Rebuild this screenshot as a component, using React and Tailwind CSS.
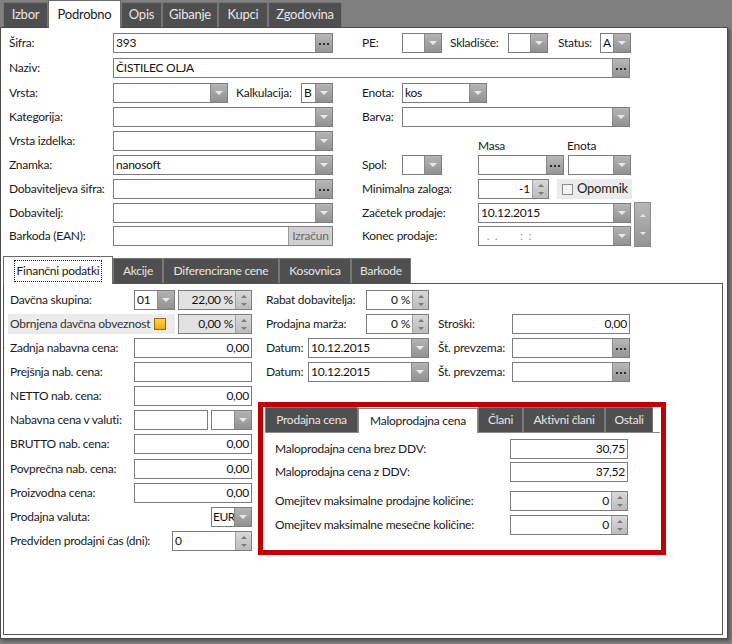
import React from "react";

function Btn({ kind }) {
  if (kind === "dots") {
    return (
      <div className="w-[17px] shrink-0 border-l border-[#8a8a8a] bg-linear-to-b from-[#b8b8b8] to-[#969696] flex items-center justify-center gap-[2px] pt-[2px]">
        <i className="w-[2px] h-[2px] bg-[#2e2e2e]" />
        <i className="w-[2px] h-[2px] bg-[#2e2e2e]" />
        <i className="w-[2px] h-[2px] bg-[#2e2e2e]" />
      </div>
    );
  }
  if (kind === "combo") {
    return (
      <div className="w-[17px] shrink-0 border-l border-[#8a8a8a] bg-linear-to-b from-[#b4b4b4] to-[#929292] flex items-center justify-center">
        <i className="w-0 h-0 border-x-[4px] border-x-transparent border-t-[4px] border-t-[#e9e9e9]" />
      </div>
    );
  }
  if (kind === "spin") {
    return (
      <div className="w-[16px] shrink-0 border-l border-[#a0a0a0] bg-linear-to-b from-[#d9d9d9] to-[#bcbcbc] flex flex-col items-center justify-center gap-[5px]">
        <i className="w-0 h-0 border-x-[3px] border-x-transparent border-b-[3px] border-b-[#7a7a7a]" />
        <i className="w-0 h-0 border-x-[3px] border-x-transparent border-t-[3px] border-t-[#7a7a7a]" />
      </div>
    );
  }
  return null;
}

function Field({ w, v = "", right, kind, ro, muted, tight }) {
  return (
    <div className={`h-[20px] shrink-0 flex border border-[#7d7d7d] ${ro ? "bg-[#e2e2e2]" : "bg-white"} ${w}`}>
      <div
        className={`flex-1 min-w-0 leading-[18px] whitespace-pre overflow-hidden ${tight ? "pl-[1px] tracking-[-0.5px]" : "px-[2px]"} ${right ? "text-right" : ""} ${muted ? "text-[#9a9a9a]" : "text-[#111]"}`}
      >
        {v}
      </div>
      {kind && <Btn kind={kind} />}
    </div>
  );
}

function Label({ w, children }) {
  return <div className={`${w} shrink-0 leading-[20px] whitespace-nowrap`}>{children}</div>;
}

function Tab({ label, active, w, focus }) {
  if (active) {
    return (
      <div className={`${w} h-[28px] -mb-px relative z-10 bg-white border border-[#6a6a6a] border-b-0 flex items-center justify-center text-[#1a1a1a]`}>
        <span className={focus ? "border border-dotted border-[#222] px-[2px] leading-[20px]" : ""}>{label}</span>
      </div>
    );
  }
  return (
    <div className={`${w} h-[25px] bg-[#4f4f4f] border border-[#777] border-b-0 flex items-center justify-center text-[#e6e6e6]`}>
      {label}
    </div>
  );
}

export default function App() {
  return (
    <div className="w-[732px] h-[644px] bg-[#808080] overflow-hidden font-['Lato',sans-serif] text-[12px] tracking-[-0.25px] text-[#1a1a1a]">
      {/* top tabs */}
      <div className="h-[27px] flex items-end pl-[3px] text-[13px]">
        <Tab w="w-[45px]" label="Izbor" />
        <Tab w="w-[73px]" label="Podrobno" active />
        <Tab w="w-[41px]" label="Opis" />
        <Tab w="w-[56px]" label="Gibanje" />
        <Tab w="w-[50px]" label="Kupci" />
        <Tab w="w-[74px]" label="Zgodovina" />
      </div>

      <div className="w-[728px] h-[612px] bg-white border border-[#4a4a4a] shadow-[2px_2px_3px_rgba(0,0,0,0.35)] flex flex-col">
        {/* header form */}
        <div className="flex flex-col pl-[8px] pt-[5px]">
          <div className="flex items-center h-[20px]">
            <Label w="w-[104px]">Šifra:</Label>
            <Field w="w-[220px]" v="393" kind="dots" />
            <div className="w-[29px] shrink-0" />
            <Label w="w-[40px]">PE:</Label>
            <Field w="w-[40px]" kind="combo" />
            <div className="w-[8px] shrink-0" />
            <Label w="w-[58px]">Skladišče:</Label>
            <Field w="w-[40px]" kind="combo" />
            <div className="w-[10px] shrink-0" />
            <Label w="w-[42px]">Status:</Label>
            <Field w="w-[31px]" v="A" kind="combo" />
          </div>

          <div className="flex items-center h-[20px] mt-[5px]">
            <Label w="w-[104px]">Naziv:</Label>
            <Field w="w-[517px]" v="ČISTILEC OLJA" kind="dots" />
          </div>

          <div className="flex items-center h-[20px] mt-[5px]">
            <Label w="w-[104px]">Vrsta:</Label>
            <Field w="w-[115px]" kind="combo" />
            <div className="w-[8px] shrink-0" />
            <Label w="w-[65px]">Kalkulacija:</Label>
            <Field w="w-[32px]" v="B" kind="combo" />
            <div className="w-[29px] shrink-0" />
            <Label w="w-[40px]">Enota:</Label>
            <Field w="w-[85px]" v="kos" kind="combo" />
          </div>

          <div className="flex items-center h-[20px] mt-[4px]">
            <Label w="w-[104px]">Kategorija:</Label>
            <Field w="w-[220px]" kind="combo" />
            <div className="w-[29px] shrink-0" />
            <Label w="w-[40px]">Barva:</Label>
            <Field w="w-[228px]" kind="combo" />
          </div>

          <div className="flex items-center h-[20px] mt-[4px]">
            <Label w="w-[104px]">Vrsta izdelka:</Label>
            <Field w="w-[220px]" kind="combo" />
            <div className="w-[145px] shrink-0" />
            <div className="w-[89px] shrink-0 self-end leading-[14px] -mb-[2px]">Masa</div>
            <div className="shrink-0 self-end leading-[14px] -mb-[2px]">Enota</div>
          </div>

          <div className="flex items-center h-[20px] mt-[4px]">
            <Label w="w-[104px]">Znamka:</Label>
            <Field w="w-[220px]" v="nanosoft" kind="combo" />
            <div className="w-[29px] shrink-0" />
            <Label w="w-[40px]">Spol:</Label>
            <Field w="w-[40px]" kind="combo" />
            <div className="w-[36px] shrink-0" />
            <Field w="w-[86px]" kind="dots" />
            <div className="w-[4px] shrink-0" />
            <Field w="w-[63px]" kind="combo" />
          </div>

          <div className="flex items-center h-[20px] mt-[4px]">
            <Label w="w-[104px]">Dobaviteljeva šifra:</Label>
            <Field w="w-[220px]" kind="dots" />
            <div className="w-[29px] shrink-0" />
            <Label w="w-[116px]">Minimalna zaloga:</Label>
            <Field w="w-[71px]" v="-1" right kind="spin" />
            <div className="w-[8px] shrink-0" />
            <div className="w-[75px] h-[20px] bg-[#ebebeb] flex items-center gap-[4px] pl-[5px]">
              <i className="w-[11px] h-[11px] border border-[#8d8d8d] bg-[#f4f4f4]" />
              <span className="text-[13px] text-[#222]">Opomnik</span>
            </div>
          </div>

          <div className="flex mt-[4px]">
            <div className="flex flex-col gap-[3px]">
              <div className="flex items-center h-[20px]">
                <Label w="w-[104px]">Dobavitelj:</Label>
                <Field w="w-[220px]" kind="combo" />
                <div className="w-[29px] shrink-0" />
                <Label w="w-[116px]">Začetek prodaje:</Label>
                <Field w="w-[153px]" v="10.12.2015" kind="combo" />
              </div>
              <div className="flex items-center h-[20px]">
                <Label w="w-[104px]">Barkoda (EAN):</Label>
                <div className="w-[220px] h-[20px] shrink-0 flex border border-[#7d7d7d] bg-white">
                  <div className="flex-1" />
                  <div className="w-[44px] border-l border-[#9a9a9a] bg-[#cfcfcf] text-[#6a6a6a] leading-[18px] text-center">Izračun</div>
                </div>
                <div className="w-[29px] shrink-0" />
                <Label w="w-[116px]">Konec prodaje:</Label>
                <Field w="w-[153px]" v={"  .  .        :  :"} muted kind="combo" />
              </div>
            </div>
            <div className="ml-[3px] -mt-[1px] w-[17px] h-[45px] border border-[#8a8a8a] bg-linear-to-b from-[#b8b8b8] to-[#949494] flex flex-col items-center justify-between py-[11px]">
              <i className="w-0 h-0 border-x-[3px] border-x-transparent border-b-[3px] border-b-[#e8e8e8]" />
              <i className="w-0 h-0 border-x-[3px] border-x-transparent border-t-[3px] border-t-[#e8e8e8]" />
            </div>
          </div>
        </div>

        {/* inner tabs */}
        <div className="ml-[2px] mt-[8px] h-[28px] flex items-end">
          <Tab w="w-[110px]" label="Finančni podatki" active focus />
          <Tab w="w-[50px]" label="Akcije" />
          <Tab w="w-[116px]" label="Diferencirane cene" />
          <Tab w="w-[72px]" label="Kosovnica" />
          <Tab w="w-[60px]" label="Barkode" />
        </div>

        <div className="ml-[2px] w-[720px] h-[352px] border border-[#555] flex pl-[6px] pt-[6px]">
          {/* left column */}
          <div className="w-[242px] shrink-0 flex flex-col gap-[4px]">
            <div className="flex items-center h-[20px]">
              <Label w="w-[124px]">Davčna skupina:</Label>
              <Field w="w-[41px]" v="01" kind="combo" />
              <div className="w-[3px] shrink-0" />
              <Field w="w-[74px]" v="22,00 %" right ro kind="spin" />
            </div>
            <div className="flex items-center h-[20px]">
              <div className="w-[167px] -ml-[2px] pl-[2px] h-[20px] bg-[#ebebeb] flex items-center shrink-0">
                <span className="text-[#333] whitespace-nowrap">Obrnjena davčna obveznost</span>
                <i className="ml-[4px] w-[12px] h-[12px] shrink-0 border border-[#9c6a00] bg-linear-to-b from-[#ffd54a] to-[#f0a800]" />
              </div>
              <div className="w-[3px] shrink-0" />
              <Field w="w-[74px]" v="0,00 %" right ro kind="spin" />
            </div>
            <div className="flex items-center h-[20px]">
              <Label w="w-[124px]">Zadnja nabavna cena:</Label>
              <Field w="w-[118px]" v="0,00" right />
            </div>
            <div className="flex items-center h-[20px]">
              <Label w="w-[124px]">Prejšnja nab. cena:</Label>
              <Field w="w-[118px]" />
            </div>
            <div className="flex items-center h-[20px]">
              <Label w="w-[124px]">NETTO nab. cena:</Label>
              <Field w="w-[118px]" v="0,00" right />
            </div>
            <div className="flex items-center h-[20px]">
              <Label w="w-[124px]">Nabavna cena v valuti:</Label>
              <Field w="w-[74px]" />
              <div className="w-[3px] shrink-0" />
              <Field w="w-[41px]" kind="combo" />
            </div>
            <div className="flex items-center h-[20px]">
              <Label w="w-[124px]">BRUTTO nab. cena:</Label>
              <Field w="w-[118px]" v="0,00" right />
            </div>
            <div className="flex items-center h-[20px] mt-[1px]">
              <Label w="w-[124px]">Povprečna nab. cena:</Label>
              <Field w="w-[118px]" v="0,00" right />
            </div>
            <div className="flex items-center h-[20px]">
              <Label w="w-[124px]">Proizvodna cena:</Label>
              <Field w="w-[118px]" v="0,00" right />
            </div>
            <div className="flex items-center h-[20px]">
              <Label w="w-[201px]">Prodajna valuta:</Label>
              <Field w="w-[41px]" v="EUR" tight kind="combo" />
            </div>
            <div className="flex items-center h-[20px]">
              <Label w="w-[162px]">Predviden prodajni čas (dni):</Label>
              <Field w="w-[80px]" v="0" kind="spin" />
            </div>
          </div>

          {/* middle + right */}
          <div className="ml-[6px] flex flex-col">
            <div className="flex flex-col gap-[4px] pl-[8px]">
              <div className="flex items-center h-[20px]">
                <Label w="w-[100px]">Rabat dobavitelja:</Label>
                <Field w="w-[63px]" v="0 %" right kind="spin" />
              </div>
              <div className="flex items-center h-[20px]">
                <Label w="w-[100px]">Prodajna marža:</Label>
                <Field w="w-[63px]" v="0 %" right kind="spin" />
                <div className="w-[9px] shrink-0" />
                <Label w="w-[74px]">Stroški:</Label>
                <Field w="w-[118px]" v="0,00" right />
              </div>
              <div className="flex items-center h-[20px]">
                <Label w="w-[42px]">Datum:</Label>
                <Field w="w-[121px]" v="10.12.2015" kind="combo" />
                <div className="w-[9px] shrink-0" />
                <Label w="w-[74px]">Št. prevzema:</Label>
                <Field w="w-[118px]" kind="dots" />
              </div>
              <div className="flex items-center h-[20px]">
                <Label w="w-[42px]">Datum:</Label>
                <Field w="w-[121px]" v="10.12.2015" kind="combo" />
                <div className="w-[9px] shrink-0" />
                <Label w="w-[74px]">Št. prevzema:</Label>
                <Field w="w-[118px]" kind="dots" />
              </div>
            </div>

            {/* highlighted retail price panel */}
            <div className="mt-[20px] w-[408px] h-[153px] border-[5px] border-[#c00000] bg-white flex flex-col">
              <div className="ml-[2px] mt-[1px] w-[395px] h-[25px] flex items-end border-b border-[#8a8a8a]">
                <Tab w="w-[93px]" label="Prodajna cena" />
                <div className="w-[120px] h-[25px] -mb-px relative bg-white border border-[#8a8a8a] border-b-0 flex items-center justify-center">
                  Maloprodajna cena
                </div>
                <Tab w="w-[45px]" label="Člani" />
                <Tab w="w-[82px]" label="Aktivni člani" />
                <Tab w="w-[48px]" label="Ostali" />
              </div>
              <div className="flex flex-col pl-[12px] pt-[6px]">
                <div className="flex items-center h-[20px]">
                  <Label w="w-[235px]">Maloprodajna cena brez DDV:</Label>
                  <Field w="w-[118px]" v="30,75" right />
                </div>
                <div className="flex items-center h-[20px] mt-[3px]">
                  <Label w="w-[235px]">Maloprodajna cena z DDV:</Label>
                  <Field w="w-[118px]" v="37,52" right />
                </div>
                <div className="flex items-center h-[20px] mt-[9px]">
                  <Label w="w-[235px]">Omejitev maksimalne prodajne količine:</Label>
                  <Field w="w-[118px]" v="0" right kind="spin" />
                </div>
                <div className="flex items-center h-[20px] mt-[4px]">
                  <Label w="w-[235px]">Omejitev maksimalne mesečne količine:</Label>
                  <Field w="w-[118px]" v="0" right kind="spin" />
                </div>
              </div>
            </div>
          </div>
        </div>
      </div>
    </div>
  );
}
